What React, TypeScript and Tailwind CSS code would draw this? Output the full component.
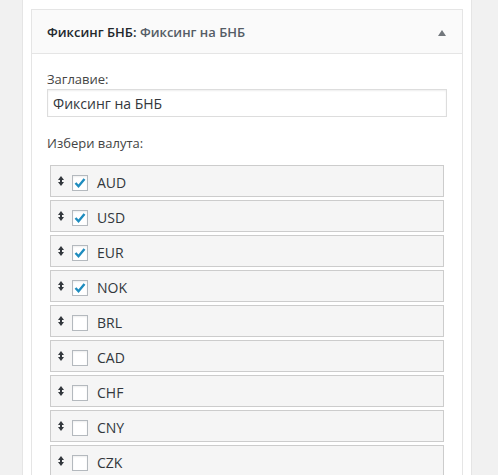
const currencies = [
  { code: 'AUD', checked: true },
  { code: 'USD', checked: true },
  { code: 'EUR', checked: true },
  { code: 'NOK', checked: true },
  { code: 'BRL', checked: false },
  { code: 'CAD', checked: false },
  { code: 'CHF', checked: false },
  { code: 'CNY', checked: false },
  { code: 'CZK', checked: false },
];

function Handle() {
  return (
    <svg width="6" height="10" viewBox="0 0 6 10" className="shrink-0">
      <path d="M0 4 L3 0 L6 4 Z" fill="#32373c" />
      <rect x="2" y="3" width="2" height="4" fill="#32373c" />
      <path d="M0 6 L3 10 L6 6 Z" fill="#32373c" />
    </svg>
  );
}

function Checkbox({ checked }: { checked: boolean }) {
  return (
    <span className="w-4 h-4 shrink-0 border border-[#b4b9be] bg-white flex items-center justify-center mt-[3px] shadow-[inset_0_1px_2px_rgba(0,0,0,0.07)]">
      {checked && (
        <svg width="14" height="14" viewBox="0 0 14 14">
          <path d="M2.5 7 L5.5 10.2 L11.5 3" fill="none" stroke="#1e8cbe" strokeWidth="2.4" />
        </svg>
      )}
    </span>
  );
}

export default function App() {
  return (
    <div className="min-h-screen bg-[#f1f1f1] font-['Open_Sans',sans-serif] overflow-hidden h-[475px]">
      <div className="ml-[22px] w-[450px] h-[475px] bg-white border-x border-[#e5e5e5] pt-[9px] pl-[8px]">
        <div className="w-[432px] border border-[#e5e5e5] bg-white">
          <div className="h-[44px] bg-[#fafafa] border-b border-[#e5e5e5] flex items-center justify-between pl-[15px] pr-[16px] pt-[2px]">
            <h3 className="text-[13px] font-semibold text-[#23282d]">
              Фиксинг БНБ:<span className="text-[#555d66]"> Фиксинг на БНБ</span>
            </h3>
            <svg width="8" height="6" viewBox="0 0 8 6">
              <path d="M0 6 L4 0 L8 6 Z" fill="#72777c" />
            </svg>
          </div>
          <div className="px-[15px] pt-[16px] pb-4">
            <label className="block text-[13px] leading-[18px] text-[#444]">Заглавие:</label>
            <div className="mt-px h-[28px] border border-[#ddd] flex items-center pl-[5px] text-[14px] text-[#32373c] shadow-[inset_0_1px_2px_rgba(0,0,0,0.07)]">
              Фиксинг на БНБ
            </div>
            <p className="mt-[17px] text-[13px] leading-[18px] text-[#444]">Избери валута:</p>
            <ul className="mt-[13px] mx-[3px] flex flex-col gap-[3px]">
              {currencies.map((c) => (
                <li
                  key={c.code}
                  className="h-[32px] border border-[#ccc] bg-[#f5f5f5] flex items-center pl-[7px] gap-[8px]"
                >
                  <Handle />
                  <Checkbox checked={c.checked} />
                  <span className="text-[14px] text-[#32373c] ml-px mt-[2px]">{c.code}</span>
                </li>
              ))}
            </ul>
          </div>
        </div>
      </div>
    </div>
  );
}
